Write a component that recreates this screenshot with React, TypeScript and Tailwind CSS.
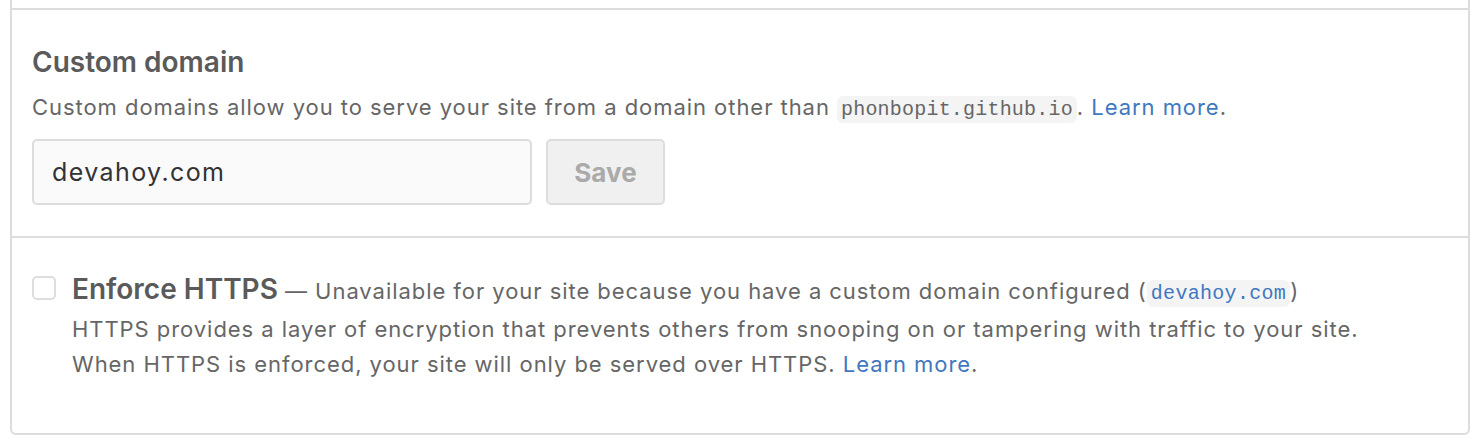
export default function App() {
  return (
    <div className="w-[1480px] h-[448px] bg-white font-['Inter','Liberation_Sans',sans-serif] text-[#666]">
      <div className="ml-[10px] w-[1460px] border-x-2 border-b-2 border-[#ddd] rounded-b-md">
        {/* tail of the section above */}
        <div className="h-[8px]" />

        {/* Custom domain */}
        <div className="border-t-2 border-[#ddd] pl-[20px] pt-[34px] pb-[31px]">
          <h3 className="text-[28px] leading-[36px] font-semibold text-[#5a5a5a]">Custom domain</h3>
          <p className="mt-[11px] text-[22px] leading-[32px] tracking-[0.95px]">
            Custom domains allow you to serve your site from a domain other than{' '}
            <code className="font-['Liberation_Mono',monospace] text-[20px] tracking-[0.2px] bg-[#f4f4f4] rounded-md px-[4px] py-[2px]">
              phonbopit.github.io
            </code>
            . <a className="text-[#4078c0]">Learn more</a>.
          </p>
          <div className="mt-[13px] flex gap-[14px]">
            <input
              defaultValue="devahoy.com"
              className="w-[500px] h-[66px] border-2 border-[#ddd] rounded-[5px] bg-[#fafafa] pl-[18px] text-[25px] tracking-[1.4px] text-[#333] outline-none"
            />
            <button className="w-[119px] h-[66px] border-2 border-[#ddd] rounded-[5px] bg-[#f0f0f0] text-[26px] font-bold text-[#aaa]">
              Save
            </button>
          </div>
        </div>

        {/* Enforce HTTPS */}
        <div className="border-t-2 border-[#ddd] pl-[20px] pt-[33px] pb-[51px] flex gap-[16px]">
          <div className="mt-[5px] w-[24px] h-[24px] shrink-0 border-2 border-[#ddd] rounded-[5px] bg-white" />
          <div className="text-[22px] tracking-[0.95px]">
            <div className="leading-[36px]">
              <span className="text-[28px] tracking-normal font-semibold text-[#5a5a5a]">Enforce HTTPS</span> — Unavailable
              for your site because you have a custom domain configured (
              <code className="font-['Liberation_Mono',monospace] text-[20px] tracking-[0.3px] text-[#4078c0] bg-[#f4f4f4] rounded-md px-[4px] py-[2px]">
                devahoy.com
              </code>
              )
            </div>
            <p className="leading-[35px]">
              HTTPS provides a layer of encryption that prevents others from snooping on or tampering with traffic to your
              site.
              <br />
              When HTTPS is enforced, your site will only be served over HTTPS. <a className="text-[#4078c0]">Learn more</a>.
            </p>
          </div>
        </div>
      </div>
    </div>
  )
}
